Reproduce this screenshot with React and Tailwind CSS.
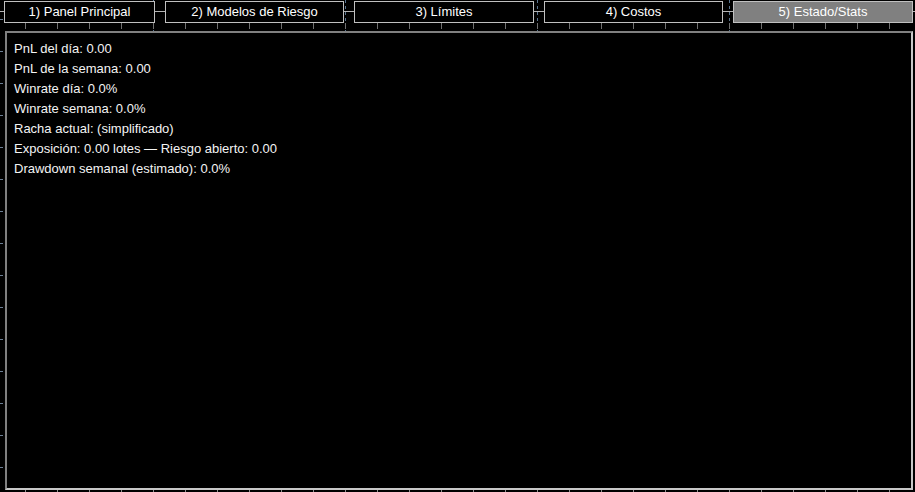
const tabs = [
  { label: '1) Panel Principal', w: 'w-[151px]' },
  { label: '2) Modelos de Riesgo', w: 'w-[179px]' },
  { label: '3) Límites', w: 'w-[180px]' },
  { label: '4) Costos', w: 'w-[179px]' },
  { label: '5) Estado/Stats', w: 'w-[180px]', active: true },
];

const stats = [
  'PnL del día: 0.00',
  'PnL de la semana: 0.00',
  'Winrate día: 0.0%',
  'Winrate semana: 0.0%',
  'Racha actual: (simplificado)',
  'Exposición: 0.00 lotes — Riesgo abierto: 0.00',
  'Drawdown semanal (estimado): 0.0%',
];

// chart bits peeking out behind the panel
function ChartBackdrop() {
  const xs = Array.from({ length: 29 }, (_, i) => 25 + i * 32);
  const ys = Array.from({ length: 15 }, (_, i) => 19 + i * 32);
  return (
    <svg className="absolute inset-0" width="915" height="492">
      <line x1="0" y1="11.5" x2="915" y2="11.5" stroke="#b4b4b4" />
      {[153, 345, 537, 729].map(x => (
        <line key={x} x1={x + 0.5} y1="0" x2={x + 0.5} y2="31" stroke="#5a7590" strokeDasharray="3 3" />
      ))}
      {xs.map(x => (
        <g key={x}>
          <line x1={x + 0.5} y1="23" x2={x + 0.5} y2="29" stroke="#707070" />
          <line x1={x + 0.5} y1="489" x2={x + 0.5} y2="492" stroke="#909090" />
        </g>
      ))}
      {ys.map(y => (
        <line key={y} x1="0" y1={y + 0.5} x2="3" y2={y + 0.5} stroke="#6c7f95" />
      ))}
    </svg>
  );
}

export default function App() {
  return (
    <div className="relative w-[915px] h-[492px] bg-black overflow-hidden font-['Liberation_Sans',Arial,sans-serif] text-[13px] text-white">
      <ChartBackdrop />
      <div className="relative flex flex-col">
        <div className="flex gap-[10px] pl-[4px] pt-[1px]">
          {tabs.map(t => (
            <div
              key={t.label}
              className={`${t.w} h-[22px] flex items-center justify-center border border-[#c0c0c0] ${t.active ? 'bg-[#808080]' : 'bg-black'}`}
            >
              {t.label}
            </div>
          ))}
        </div>
        <div className="ml-[5px] mt-[8px] w-[908px] h-[459px] bg-black border-t-2 border-l-2 border-[#808080] border-r-2 border-b-2 border-r-[#c8c8c8] border-b-[#c8c8c8] pl-[7px] pt-[6px]">
          {stats.map(s => (
            <div key={s} className="h-[20px] leading-[20px] text-[#f4f4f4]">{s}</div>
          ))}
        </div>
      </div>
    </div>
  );
}
